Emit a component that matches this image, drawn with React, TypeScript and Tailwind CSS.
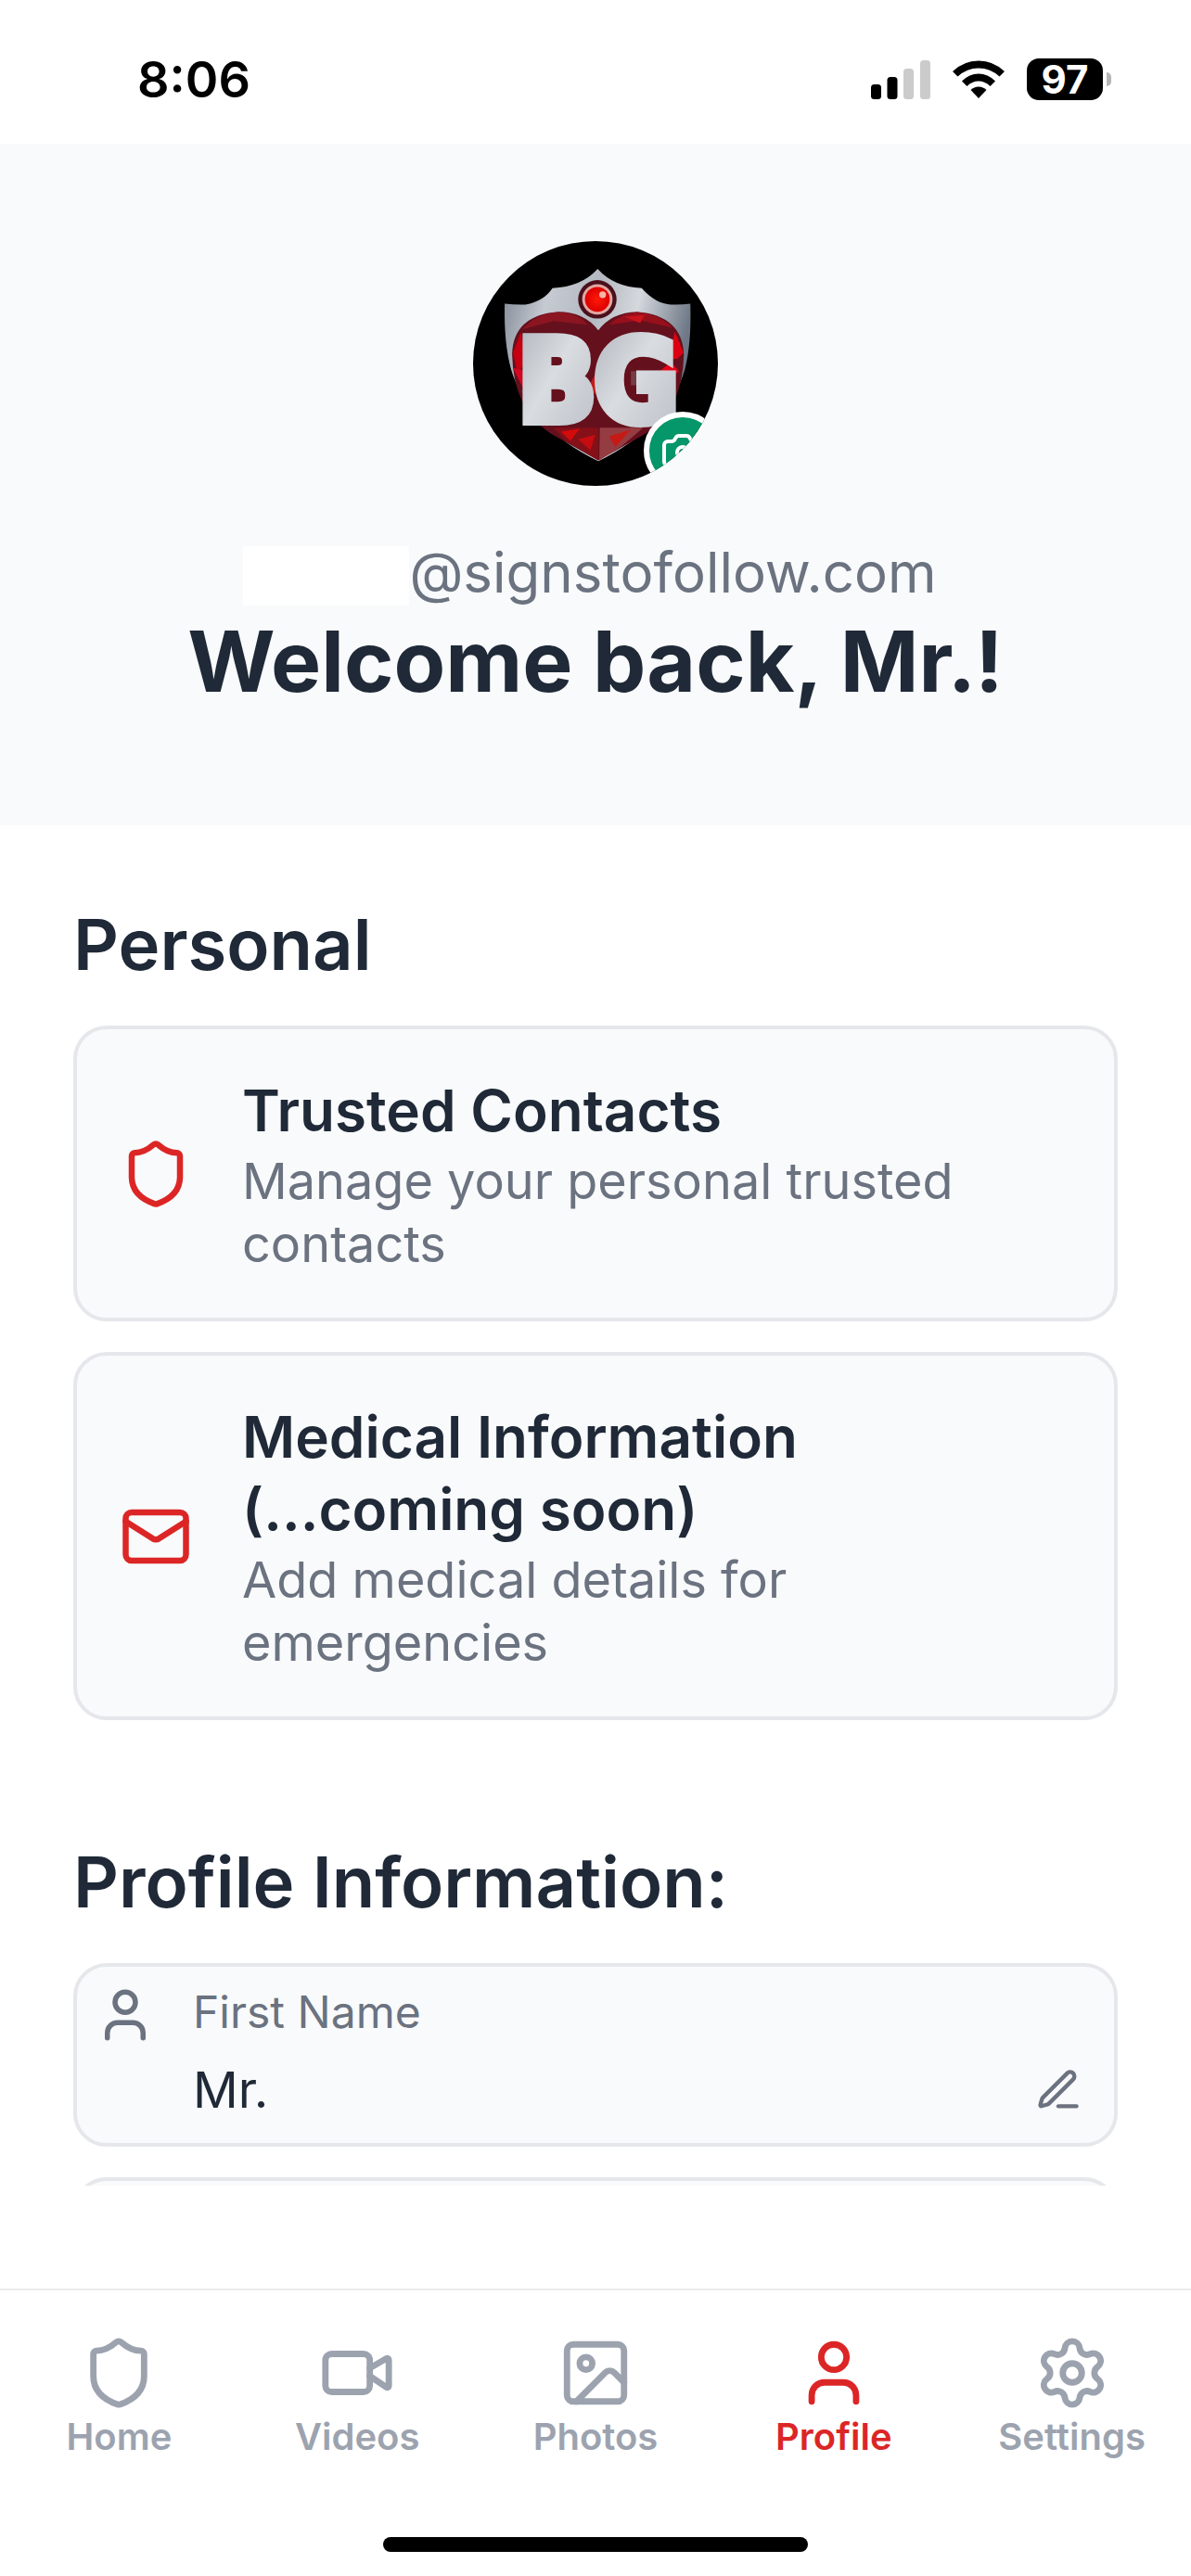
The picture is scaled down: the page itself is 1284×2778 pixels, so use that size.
import type { ReactNode } from "react";
import { Camera, Image, Mail, Settings, Shield, User, Video, type LucideIcon } from "lucide-react";

type ActionCardProps = {
  icon: LucideIcon;
  title: string;
  description: string;
};

type ProfileFieldProps = {
  icon: LucideIcon;
  label: string;
  value: string;
};

const tabs: { label: string; href: string; icon: LucideIcon }[] = [
  { label: "Home", href: "#home", icon: Shield },
  { label: "Videos", href: "#videos", icon: Video },
  { label: "Photos", href: "#photos", icon: Image },
  { label: "Profile", href: "#profile", icon: User },
  { label: "Settings", href: "#settings", icon: Settings },
];

function StatusBar() {
  return (
    <div className="flex h-[155px] shrink-0 items-center justify-between pt-4 pr-[86px] pl-[148px] text-black">
      <span className="text-[54px] leading-[64px] font-semibold">8:06</span>
      <div className="flex items-center gap-6">
        <svg viewBox="0 0 64 42" className="h-[42px] w-16" aria-label="Signal strength">
          <rect x="0" y="26" width="11" height="16" rx="3.5" />
          <rect x="17.5" y="18" width="11" height="24" rx="3.5" />
          <rect x="35" y="9" width="11" height="33" rx="3.5" fill="#cbcbcb" />
          <rect x="53" y="0" width="11" height="42" rx="3.5" fill="#cbcbcb" />
        </svg>
        <svg viewBox="0 0 56 42" className="h-[42px] w-14" aria-label="Wi-Fi">
          <path d="M0 12Q12 .5 28 .5T56 12L50.500 17.500Q40.500 8.500 28 8.500T5.500 17.500Z" />
          <path d="M10 22.500Q18 14.500 28 14.500T46 22.500L40.500 28Q35 22.500 28 22.500T15.500 28Z" />
          <path d="M19.500 32Q23 28.500 28 28.500T36.500 32L28 41Z" />
        </svg>
        <div className="flex items-center gap-1">
          <span className="flex h-[45px] w-[82px] items-center justify-center rounded-[13px] bg-black text-[42px] leading-none font-bold text-white">
            97
          </span>
          <span className="h-[15px] w-[5px] rounded-r-full bg-[#b5b5b5]" />
        </div>
      </div>
    </div>
  );
}

function AvatarEmblem() {
  return (
    <svg viewBox="61 60 790 790" className="size-full" role="img" aria-label="Profile photo">
      <defs>
        <linearGradient id="steel" x1="0" y1="0" x2="1" y2="0.25">
          <stop offset="0" stopColor="#7f8794" />
          <stop offset="0.25" stopColor="#c6cad1" />
          <stop offset="0.5" stopColor="#b4b8c0" />
          <stop offset="0.72" stopColor="#d5d8dd" />
          <stop offset="1" stopColor="#6e7886" />
        </linearGradient>
        <linearGradient id="letters" x1="0" y1="0" x2="1" y2="1">
          <stop offset="0" stopColor="#aeb3bb" />
          <stop offset="0.45" stopColor="#d9dce0" />
          <stop offset="1" stopColor="#b9bec6" />
        </linearGradient>
        <radialGradient id="gem">
          <stop offset="0" stopColor="#ff1a0a" />
          <stop offset="1" stopColor="#dd0000" />
        </radialGradient>
      </defs>
      <rect x="61" y="60" width="790" height="790" fill="#000" />
      <path
        d="M463 150Q515 208 605 212Q650 263 700 265Q735 266 762 262Q766 390 744 475Q690 660 465 770Q240 660 184 475Q160 390 163 262Q195 266 230 265Q290 254 317 212Q410 208 463 150Z"
        fill="url(#steel)"
      />
      <path
        d="M465 348Q420 288 335 288Q190 300 187 425Q190 600 310 680L465 768L620 680Q738 600 741 425Q735 300 590 288Q508 290 465 348Z"
        fill="#65101d"
      />
      <path d="M220 345Q270 290 340 290Q400 292 430 330L320 318Z" fill="#8c1522" />
      <path d="M500 330Q540 292 590 290Q660 294 705 340L600 316Z" fill="#96101c" />
      <path d="M550 305L615 298L600 325Z" fill="#c9131d" />
      <path d="M190 420L215 355L235 440L205 490Z" fill="#c60012" />
      <path d="M190 470L240 480L275 560L225 540Z" fill="#d10620" />
      <path d="M215 540L270 560L300 660L245 600Z" fill="#65353e" />
      <path d="M740 420L712 352L690 440L720 440Z" fill="#dc0012" />
      <path d="M570 480L690 480L650 525L570 525Z" fill="#743c44" />
      <path d="M625 510L700 450L725 480L665 535Z" fill="#e30618" />
      <path d="M320 662L465 662L465 768L360 705Z" fill="#851018" />
      <path d="M345 675L405 665L375 705Z" fill="#d40b0b" />
      <path d="M400 700L455 685L440 735Z" fill="#c60c10" />
      <path d="M470 662L610 662L540 722L468 768Z" fill="#953c43" />
      <path d="M500 690L570 668L520 725Z" fill="#c51a16" />
      <path d="M435 525L455 490L468 525L455 555Z" fill="#c61b18" />
      <g
        fill="url(#letters)"
        stroke="url(#letters)"
        strokeWidth="30"
        fontFamily="'Liberation Sans Narrow', 'DejaVu Sans Condensed', sans-serif"
        fontSize="370"
        fontWeight="700"
        textAnchor="middle"
      >
        <text x="332" y="640">B</text>
        <text x="588" y="640">G</text>
      </g>
      <circle cx="462" cy="248" r="62" fill="#4a101c" />
      <circle cx="462" cy="248" r="49" fill="#e2a7a2" />
      <circle cx="462" cy="248" r="40" fill="url(#gem)" />
      <circle cx="479" cy="233" r="11" fill="#f7b5a8" />
    </svg>
  );
}

function ProfileHeader() {
  return (
    <header className="flex flex-col items-center bg-[#f9fafb] pt-[105px] pb-[121px]">
      <div className="relative size-[264px] overflow-hidden rounded-full">
        <AvatarEmblem />
        <button
          type="button"
          aria-label="Change photo"
          className="absolute -right-1 -bottom-1 flex size-[84px] items-center justify-center rounded-full border-6 border-white bg-[#059669] text-white"
        >
          <Camera className="size-12 shrink-0" />
        </button>
      </div>
      <div className="mt-[65px] flex h-16 items-start pr-3">
        <span className="h-16 w-[179px] bg-white" />
        <p className="text-[60px] leading-[56px] text-[#6b7280]">@signstofollow.com</p>
      </div>
      <h1 className="mt-1 text-[91px] leading-[112px] font-bold">Welcome back, Mr.!</h1>
    </header>
  );
}

function Section({ title, children }: { title: string; children: ReactNode }) {
  return (
    <section>
      <h2 className="mb-10 text-[76px] leading-[96px] font-semibold">{title}</h2>
      <div className="flex flex-col gap-[33px]">{children}</div>
    </section>
  );
}

function ActionCard({ icon: Icon, title, description }: ActionCardProps) {
  return (
    <button
      type="button"
      className="flex w-full items-center gap-[54px] rounded-[36px] border-4 border-[#e5e7eb] bg-[#f9fafb] px-[46px] py-[45px] text-left"
    >
      <Icon className="size-[78px] shrink-0 text-[#dc2626]" />
      <span className="flex max-w-[800px] flex-col gap-[3px] pt-1">
        <span className="text-[62px] leading-[78px] font-semibold">{title}</span>
        <span className="text-[54px] leading-[68px] text-[#6b7280]">{description}</span>
      </span>
    </button>
  );
}

function PenIcon() {
  return (
    <svg
      viewBox="0 0 24 24"
      className="size-[52px]"
      fill="none"
      stroke="currentColor"
      strokeWidth="2"
      strokeLinecap="round"
      strokeLinejoin="round"
    >
      <path d="M12 20h9" />
      <path d="M16.376 3.622a1 1 0 0 1 3.002 3.002L7.368 18.635a2 2 0 0 1-.855.506l-2.872.838a.5.5 0 0 1-.62-.62l.838-2.872a2 2 0 0 1 .506-.854z" />
    </svg>
  );
}

function ProfileField({ icon: Icon, label, value }: ProfileFieldProps) {
  return (
    <div className="flex items-start gap-10 rounded-[36px] border-4 border-[#e5e7eb] bg-[#f9fafb] py-[19px] pr-[34px] pl-[19px]">
      <Icon className="size-[66px] shrink-0 text-[#6b7280]" />
      <div className="flex-1">
        <p className="text-[48px] leading-[60px] text-[#6b7280]">{label}</p>
        <div className="mt-4 flex items-center justify-between">
          <p className="text-[54px] leading-[76px]">{value}</p>
          <button type="button" aria-label={`Edit ${label}`} className="text-[#6b7280]">
            <PenIcon />
          </button>
        </div>
      </div>
    </div>
  );
}

function TabBar() {
  return (
    <nav className="shrink-0 border-t-2 border-[#ebebeb] pt-12 pb-[26px]">
      <div className="grid grid-cols-5">
        {tabs.map(({ label, href, icon: Icon }) => {
          const active = label === "Profile";

          return (
            <a
              key={label}
              href={href}
              aria-current={active ? "page" : undefined}
              className={`flex flex-col items-center gap-1 ${active ? "text-[#dc2626]" : "text-[#9ca3af]"}`}
            >
              <Icon className="size-[82px]" />
              <span className="text-[40px] leading-12 font-semibold">{label}</span>
            </a>
          );
        })}
      </div>
      <div className="mx-auto mt-[84px] h-4 w-[458px] rounded-full bg-black" />
    </nav>
  );
}

export default function App() {
  return (
    <div className="flex h-screen flex-col bg-white font-['Inter','Liberation_Sans',sans-serif] text-[#1f2937]">
      <StatusBar />
      <main className="mb-[111px] min-h-0 flex-1 overflow-y-auto [scrollbar-width:none]">
        <ProfileHeader />
        <div className="flex flex-col gap-[126px] px-[79px] pt-20">
          <Section title="Personal">
            <ActionCard icon={Shield} title="Trusted Contacts" description="Manage your personal trusted contacts" />
            <ActionCard
              icon={Mail}
              title="Medical Information (...coming soon)"
              description="Add medical details for emergencies"
            />
          </Section>
          <Section title="Profile Information:">
            <ProfileField icon={User} label="First Name" value="Mr." />
            <div className="h-[198px] rounded-[36px] border-4 border-[#e5e7eb] bg-[#f9fafb]" />
          </Section>
        </div>
      </main>
      <TabBar />
    </div>
  );
}
